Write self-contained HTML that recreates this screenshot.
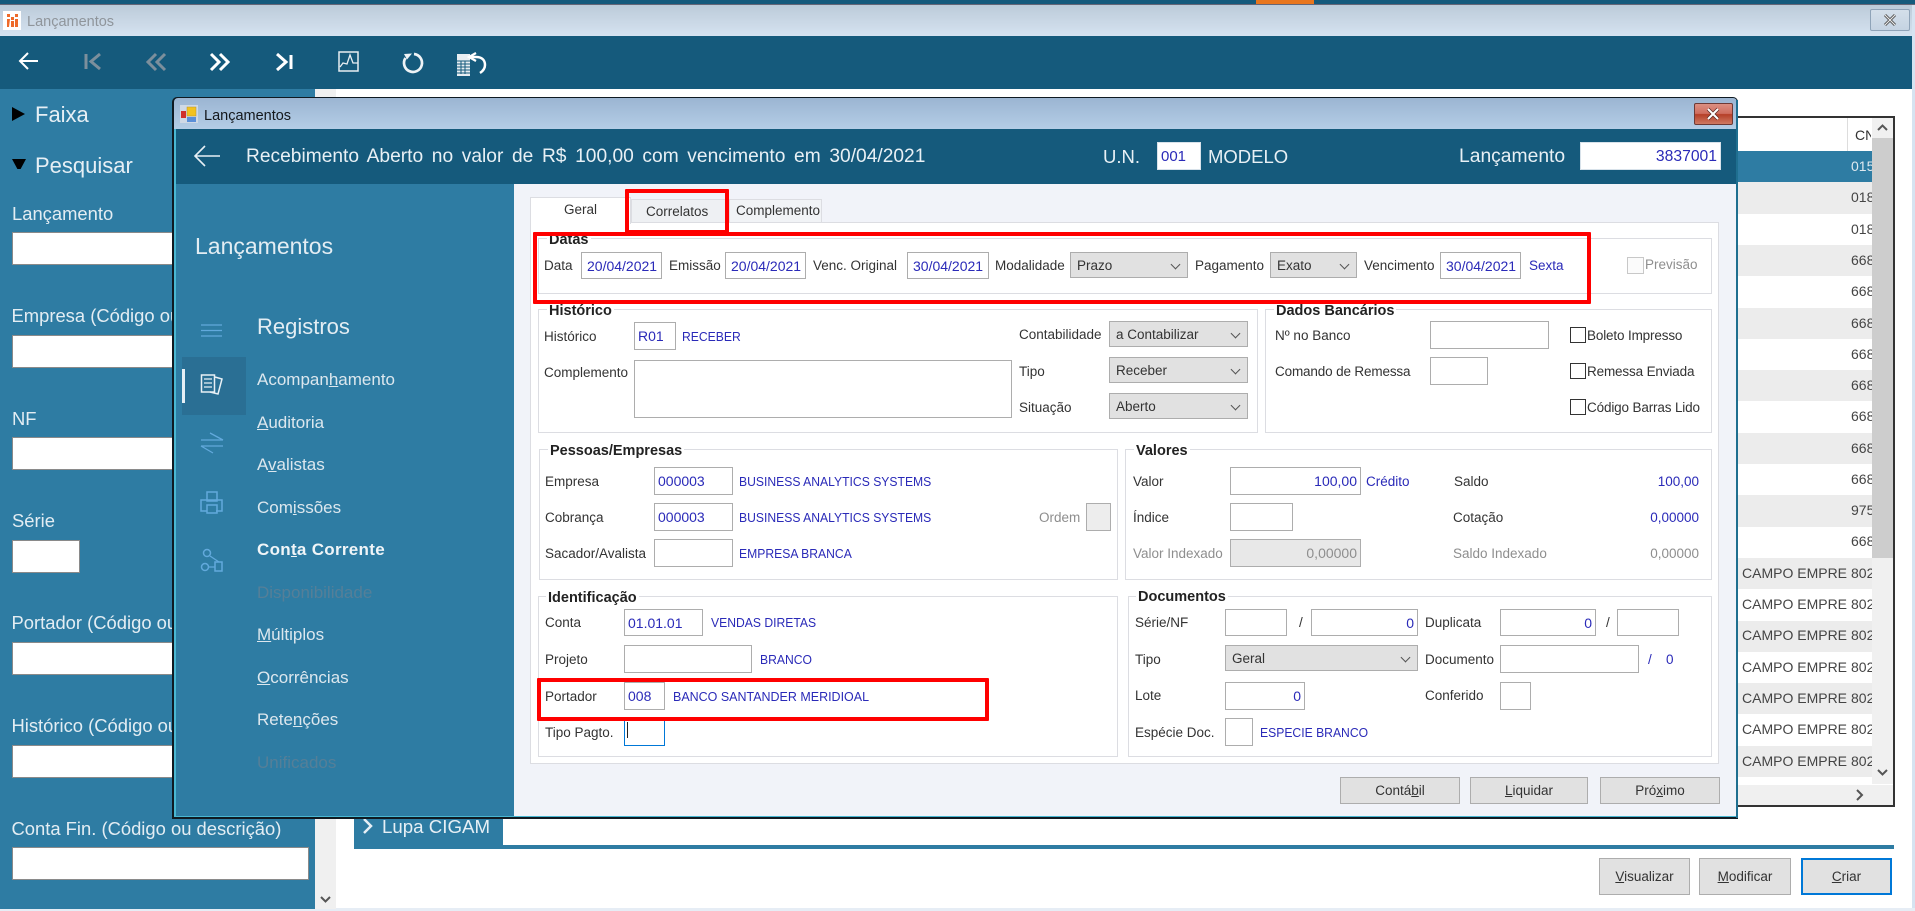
<!DOCTYPE html>
<html lang="pt-BR"><head><meta charset="utf-8"><title>Lançamentos</title>
<style>
html,body{margin:0;padding:0;width:1915px;height:911px;overflow:hidden;background:#fff}
body{position:relative;font-family:"Liberation Sans",sans-serif;font-size:13.5px;color:#333}
div,span.a,svg{position:absolute}
.t{position:absolute;line-height:20px;height:20px;white-space:nowrap}
.b{color:#2a2ab8;font-size:13px}
.c{transform:scaleX(.935);transform-origin:0 50%}
.g{color:#8e8e8e}
.i{background:#fff;border:1px solid #adadad;box-sizing:border-box;color:#2a2ab8;line-height:27px;padding:0 3px;font-size:14px;white-space:nowrap}
.d{padding-left:5px}
.r{text-align:right}
.s{background:#e1e1e1;border:1px solid #adadad;box-sizing:border-box;color:#333;line-height:25px;padding:0 6px;font-size:13.5px}
.s:after{content:"";position:absolute;right:8px;top:8px;width:6px;height:6px;border-right:1px solid #555;border-bottom:1px solid #555;transform:rotate(45deg)}
.gb{border:1px solid #dcdde2;box-sizing:border-box;background:#fff}
.l{font-weight:bold;font-size:14.5px;color:#222;background:#fff;padding:0 2px;line-height:16px;white-space:nowrap}
.btn{background:#e1e1e1;border:1px solid #adadad;box-sizing:border-box;text-align:center;color:#333;font-size:13.5px}
.red{border:4px solid #f00;box-sizing:border-box;border-radius:1px}
.lab{color:#e3edf3;font-size:18.4px}
.in{background:#fff;border:1px solid #8a8a8a;box-sizing:border-box;left:12px;width:297px;height:33px}
.m{color:#dce7ee;font-size:17px;left:257px}
.row{left:1500px;width:372px;height:31.3px}
.cell{position:absolute;line-height:31px;font-size:14px;color:#444;white-space:nowrap}
.cb{border:1px solid #333;box-sizing:border-box;background:#fff;width:16px;height:16px;left:1570px}
.n{letter-spacing:-.15px}
</style></head><body>

<!-- top strip -->
<div style="left:0;top:0;width:1915px;height:5px;background:#155a7c"></div>
<div style="left:1256px;top:0;width:58px;height:4px;background:#e8761e"></div>
<!-- outer title bar -->
<div style="left:0;top:4px;width:1915px;height:32px;background:linear-gradient(#bccbd9,#d6e3f1);border-top:1px solid #667"></div>
<div style="left:3px;top:11px;width:18px;height:19px;background:#fff"></div>
<svg style="left:0;top:0" width="30" height="36"><path d="M7 14h3v3h-3zM11 17h3v3h-3zM15 14h3v3h-3zM7 19h3l-1 8h-2zM11 21h3v6h-3zM15 19h3v8h-3z" fill="#ee6a2a"/></svg>
<div class="t" style="left:27px;top:12px;font-size:14.5px;color:#8f959b">Lançamentos</div>
<div style="left:1870px;top:9px;width:40px;height:22px;border:1px solid #8fa3b8;box-sizing:border-box;border-radius:2px;background:linear-gradient(#d4dfea,#c5d3e2)"></div>
<svg style="left:1870px;top:9px" width="40" height="22"><path d="M15 6l10 10M25 6L15 16" stroke="#555" stroke-width="3"/><path d="M15 6l10 10M25 6L15 16" stroke="#eee" stroke-width="1"/></svg>
<div style="left:1912px;top:5px;width:3px;height:906px;background:#d6e3f1"></div>
<div style="left:0;top:908px;width:1915px;height:3px;background:#e6edf5"></div>
<!-- toolbar -->
<div style="left:0;top:36px;width:1912px;height:53px;background:#155a7c"></div>
<svg style="left:0;top:36px" width="520" height="53" fill="none" stroke-linecap="butt">
<g transform="translate(0,-36)">
<path d="M38 61H20M28 53l-8 8 8 8" stroke="#fff" stroke-width="2"/>
<path d="M86 54v15M100 54l-9 7.500 9 7.500" stroke="#7c8f9c" stroke-width="3"/>
<path d="M156 54l-8 8 8 8M165 54l-8 8 8 8" stroke="#7c8f9c" stroke-width="3"/>
<path d="M211 54l8 8-8 8M220 54l8 8-8 8" stroke="#fff" stroke-width="3"/>
<path d="M277 54l9 8-9 8M291 55v14" stroke="#fff" stroke-width="3"/>
<rect x="339" y="52" width="19" height="19" stroke="#e8eef2" stroke-width="1.500"/><path d="M340 67l3-4 4 1 3-9 3 8h5" stroke="#e8eef2" stroke-width="1.300"/>
<path d="M414 54A9 9 0 1 1 405.500 58" stroke="#eef3f6" stroke-width="2.700"/><path d="M404 54l8-.5-5 6z" fill="#eef3f6"/>
<rect x="457" y="54" width="13" height="22" fill="#e8eef2" stroke="none"/><path d="M457 61h13M457 64h13M457 67h13M457 70h13M457 73h13M461 61v13M465 61v13" stroke="#155a7c" stroke-width="1"/>
<path d="M470 57h6c6 0 9 3 9 8 0 3-2 6-5 8" stroke="#fff" stroke-width="2.500"/><path d="M476 53l-7 4 7 4" stroke="#fff" stroke-width="2.200"/>
</g></svg>
<!-- left panel -->
<div style="left:0;top:89px;width:315px;height:820px;background:#2e7ca3"></div>
<svg style="left:0;top:89px" width="40" height="80"><path d="M12 18l13 7-13 7zM12 70h14l-7 13z" fill="#000"/></svg>
<div class="t" style="left:35px;top:105px;font-size:22px;color:#e6eff5">Faixa</div>
<div class="t" style="left:35px;top:156px;font-size:22px;color:#e6eff5">Pesquisar</div>
<div class="t lab" style="left:12px;top:204px">Lançamento</div><div class="in" style="top:232px"></div>
<div class="t lab" style="left:11.500px;top:306px">Empresa (Código ou descrição)</div><div class="in" style="top:335px"></div>
<div class="t lab" style="left:12px;top:409px">NF</div><div class="in" style="top:437px"></div>
<div class="t lab" style="left:12px;top:511px">Série</div><div class="in" style="top:540px;width:68px"></div>
<div class="t lab" style="left:11.500px;top:613px">Portador (Código ou descrição)</div><div class="in" style="top:642px"></div>
<div class="t lab" style="left:11.500px;top:716px">Histórico (Código ou descrição)</div><div class="in" style="top:745px"></div>
<div class="t lab" style="left:11.500px;top:819px">Conta Fin. (Código ou descrição)</div><div class="in" style="top:847px"></div>
<!-- scrollbar -->
<div style="left:315px;top:89px;width:21px;height:820px;background:#f0f0f0"></div>
<svg style="left:315px;top:890px" width="21" height="18"><path d="M6 7l4.500 4.500L15 7" fill="none" stroke="#555" stroke-width="2"/></svg>
<!-- table -->
<div style="left:1500px;top:116px;width:395px;height:691px;border:1px solid #333;border-width:2px 2px 2px 0;box-sizing:border-box;background:#fff"></div>
<div class="cell" style="left:1855px;top:120px;font-size:14px;width:16px;overflow:hidden;color:#333;line-height:30px">CNPJ</div>
<div style="left:1847px;top:118px;width:1px;height:33px;background:#ddd"></div>
<div class="row" style="top:151px;background:#2e7ca3"></div>
<div class="row" style="top:182.300px;background:#ececec"></div>
<div class="row" style="top:244.900px;background:#ececec"></div>
<div class="row" style="top:307.500px;background:#ececec"></div>
<div class="row" style="top:370.100px;background:#ececec"></div>
<div class="row" style="top:432.700px;background:#ececec"></div>
<div class="row" style="top:495.300px;background:#ececec"></div>
<div class="row" style="top:557.900px;background:#ececec"></div>
<div class="row" style="top:620.500px;background:#ececec"></div>
<div class="row" style="top:683.100px;background:#ececec"></div>
<div class="row" style="top:745.700px;background:#ececec"></div>
<div style="left:1851px;top:151px;width:21px;height:626px;overflow:hidden">
<div class="cell" style="left:0;top:0;color:#dfe9ef">015</div>
<div class="cell" style="left:0;top:31px">018</div>
<div class="cell" style="left:0;top:63px">018</div>
<div class="cell" style="left:0;top:94px">668</div>
<div class="cell" style="left:0;top:125px">668</div>
<div class="cell" style="left:0;top:157px">668</div>
<div class="cell" style="left:0;top:188px">668</div>
<div class="cell" style="left:0;top:219px">668</div>
<div class="cell" style="left:0;top:250px">668</div>
<div class="cell" style="left:0;top:282px">668</div>
<div class="cell" style="left:0;top:313px">668</div>
<div class="cell" style="left:0;top:344px">975</div>
<div class="cell" style="left:0;top:375px">668</div>
<div class="cell" style="left:0;top:407px">802</div>
<div class="cell" style="left:0;top:438px">802</div>
<div class="cell" style="left:0;top:469px">802</div>
<div class="cell" style="left:0;top:501px">802</div>
<div class="cell" style="left:0;top:532px">802</div>
<div class="cell" style="left:0;top:563px">802</div>
<div class="cell" style="left:0;top:595px">802</div>
</div>
<div class="cell" style="left:1742px;top:558px">CAMPO EMPRE</div>
<div class="cell" style="left:1742px;top:589px">CAMPO EMPRE</div>
<div class="cell" style="left:1742px;top:620px">CAMPO EMPRE</div>
<div class="cell" style="left:1742px;top:652px">CAMPO EMPRE</div>
<div class="cell" style="left:1742px;top:683px">CAMPO EMPRE</div>
<div class="cell" style="left:1742px;top:714px">CAMPO EMPRE</div>
<div class="cell" style="left:1742px;top:746px">CAMPO EMPRE</div>
<div style="left:1872px;top:118px;width:21px;height:666px;background:#f0f0f0"></div>
<div style="left:1872px;top:138px;width:21px;height:420px;background:#cdcdcd"></div>
<svg style="left:1872px;top:118px" width="21" height="20"><path d="M6 12l4.500-4.500L15 12" fill="none" stroke="#555" stroke-width="2"/></svg>
<svg style="left:1872px;top:764px" width="21" height="20"><path d="M6 6l4.500 4.500L15 6" fill="none" stroke="#555" stroke-width="2"/></svg>
<div style="left:1500px;top:785px;width:393px;height:20px;background:#f0f0f0"></div>
<svg style="left:1850px;top:785px" width="20" height="20"><path d="M7 5l5 5-5 5" fill="none" stroke="#555" stroke-width="2"/></svg>
<!-- lower -->
<div style="left:354px;top:800px;width:149px;height:49px;background:#2e7ca3"></div>
<div style="left:503px;top:845px;width:1391px;height:4px;background:#2e7ca3"></div>
<svg style="left:360px;top:816px" width="20" height="20"><path d="M4 3l7 7-7 7" fill="none" stroke="#e6eff5" stroke-width="2.500"/></svg>
<div class="t" style="left:382px;top:817px;font-size:18.700px;color:#e6eff5">Lupa CIGAM</div>
<div class="btn" style="left:1599px;top:858px;width:91px;height:37px;line-height:36px"><u>V</u>isualizar</div>
<div class="btn" style="left:1699px;top:858px;width:92px;height:37px;line-height:36px"><u>M</u>odificar</div>
<div class="btn" style="left:1801px;top:858px;width:91px;height:37px;line-height:34px;border:2px solid #0078d7"><u>C</u>riar</div>

<!-- DIALOG -->
<div style="left:172px;top:97px;width:1566px;height:722px;background:#0f1a22;border-radius:5px 5px 0 0"></div>
<div style="left:174px;top:98px;width:1563px;height:719px;background:linear-gradient(#9bb5d2 0,#b4cde6 31px,#49b7d2 31px);border-radius:4px 4px 0 0"></div>
<div style="left:176px;top:129px;width:1560px;height:55px;background:#155a7c"></div>
<div style="left:176px;top:184px;width:338px;height:632px;background:#2e7ca3"></div>
<div style="left:514px;top:184px;width:1222px;height:632px;background:#f1f3f9"></div>
<div style="left:1736px;top:100px;width:2px;height:718px;background:#1f6f90"></div>
<!-- dialog title -->
<svg style="left:178px;top:104px" width="22" height="20"><rect x="2" y="1" width="18" height="18" fill="#cfd9e6"/><rect x="3" y="7" width="5" height="7" fill="#d0302a"/><rect x="9" y="3" width="9" height="9" fill="#f2c21f" stroke="#b8932a" stroke-width=".5"/><rect x="9" y="13" width="9" height="5" fill="#5a8fd8"/></svg>
<div class="t" style="left:204px;top:106px;font-size:14.500px;color:#14181c">Lançamentos</div>
<div style="left:1694px;top:103px;width:39px;height:22px;border:1px solid #6d3a36;box-sizing:border-box;border-radius:2px;background:linear-gradient(#dc8f82 0,#cf6d5e 48%,#b53e27 52%,#cf7a63 100%)"></div>
<svg style="left:1694px;top:103px" width="39" height="22"><path d="M14 6l10 10M24 6L14 16" stroke="#5b2a26" stroke-width="3.500"/><path d="M14 6l10 10M24 6L14 16" stroke="#fff" stroke-width="2"/></svg>
<!-- dialog header -->
<svg style="left:190px;top:140px" width="36" height="32"><path d="M30 16H6M15 6L5 16l10 10" fill="none" stroke="#e6eff5" stroke-width="1.600"/></svg>
<div class="t" style="left:246px;top:147px;font-size:19.200px;word-spacing:3.300px;color:#e8f0f5">Recebimento Aberto no valor de R$ 100,00 com vencimento em 30/04/2021</div>
<div class="t" style="left:1103px;top:147px;font-size:18.500px;color:#e8f0f5">U.N.</div>
<div class="i" style="left:1157px;top:142px;width:44px;height:28px;font-size:15px;line-height:28px;border-color:#d8e2ea">001</div>
<div class="t" style="left:1208px;top:147px;font-size:18.500px;color:#e8f0f5">MODELO</div>
<div class="t" style="left:1459px;top:147px;font-size:19.300px;color:#e8f0f5">Lançamento</div>
<div class="i r" style="left:1580px;top:142px;width:141px;height:28px;font-size:15.700px;line-height:28px;border-color:#d8e2ea">3837001</div>
<!-- side panel -->
<div class="t" style="left:195px;top:236px;font-size:23px;color:#e3edf3">Lançamentos</div>
<div class="t" style="left:257px;top:317px;font-size:22px;color:#e3edf3">Registros</div>
<div style="left:182px;top:357px;width:64px;height:58px;background:#2a6f94"></div>
<div style="left:182px;top:369px;width:2.500px;height:34px;background:#e6eff5"></div>
<svg style="left:170px;top:300px" width="80" height="290" fill="none">
<path d="M31 25h21M31 30.500h21M31 36h21" stroke="#62a9dc" stroke-width="1.300"/>
<rect x="31.500" y="75" width="13" height="17" stroke="#e8f0f5" stroke-width="1.500"/><path d="M34 79h8M34 83h8M34 87h8" stroke="#e8f0f5" stroke-width="1.200"/><path d="M45 77l7 2-4 15-8-2" stroke="#e8f0f5" stroke-width="1.500"/>
<path d="M31 140h22M40 133l13 7M31 146h22M31 146l12 7" stroke="#62a9dc" stroke-width="1.300"/>
<rect x="37" y="192" width="10" height="9" stroke="#62a9dc" stroke-width="1.500"/><path d="M37 211h-6v-11h21v11h-6" stroke="#62a9dc" stroke-width="1.500"/><rect x="37" y="205" width="10" height="8" stroke="#62a9dc" stroke-width="1.500"/>
<circle cx="37" cy="253" r="3.500" stroke="#62a9dc" stroke-width="1.500"/><circle cx="35" cy="267" r="3.500" stroke="#62a9dc" stroke-width="1.500"/><rect x="45" y="262" width="7" height="9" stroke="#62a9dc" stroke-width="1.500"/><path d="M40 256l9 6M39 267h6" stroke="#62a9dc" stroke-width="1.300"/>
</svg>
<div class="t m" style="top:370px">Acompan<u>h</u>amento</div>
<div class="t m" style="top:413px"><u>A</u>uditoria</div>
<div class="t m" style="top:455px">A<u>v</u>alistas</div>
<div class="t m" style="top:498px">Com<u>i</u>ssões</div>
<div class="t m" style="top:540px;font-weight:bold;color:#f0f5f8;letter-spacing:.3px">Con<u>t</u>a Corrente</div>
<div class="t m" style="top:583px;color:#557f98">Disponibilidade</div>
<div class="t m" style="top:625px"><u>M</u>últiplos</div>
<div class="t m" style="top:668px"><u>O</u>corrências</div>
<div class="t m" style="top:710px">Rete<u>n</u>ções</div>
<div class="t m" style="top:753px;color:#557f98">Unificados</div>

<!-- tabs -->
<div style="left:530px;top:222px;width:1189px;height:542px;background:#fff;border:1px solid #dcdde2;box-sizing:border-box"></div>
<div style="left:631px;top:199px;width:98px;height:24px;background:#eef0f3;border:1px solid #dcdde2;box-sizing:border-box"></div>
<div style="left:729px;top:199px;width:93px;height:24px;background:#f1f3f6;border:1px solid #dcdde2;box-sizing:border-box"></div>
<div style="left:530px;top:197px;width:101px;height:27px;background:#fff;border:1px solid #dcdde2;border-bottom:0;box-sizing:border-box"></div>
<div class="t" style="left:564px;top:200px;font-size:13.500px">Geral</div>
<div class="t" style="left:646px;top:202px;font-size:13.500px">Correlatos</div>
<div class="t" style="left:736px;top:201px;font-size:13.500px">Complemento</div>

<!-- groups -->
<div class="gb" style="left:538px;top:238px;width:1174px;height:56px"></div>
<div class="l" style="left:547px;top:232px">Datas</div>
<div class="t" style="left:544px;top:256px">Data</div>
<div class="i d" style="left:581px;top:252px;width:81px;height:27px">20/04/2021</div>
<div class="t" style="left:669px;top:256px">Emissão</div>
<div class="i d" style="left:725px;top:252px;width:81px;height:27px">20/04/2021</div>
<div class="t" style="left:813px;top:256px">Venc. Original</div>
<div class="i d" style="left:907px;top:252px;width:82px;height:27px">30/04/2021</div>
<div class="t" style="left:995px;top:256px">Modalidade</div>
<div class="s" style="left:1070px;top:252px;width:118px;height:26px">Prazo</div>
<div class="t" style="left:1195px;top:256px">Pagamento</div>
<div class="s" style="left:1270px;top:252px;width:87px;height:26px">Exato</div>
<div class="t" style="left:1364px;top:256px">Vencimento</div>
<div class="i d" style="left:1440px;top:252px;width:81px;height:27px">30/04/2021</div>
<div class="t b" style="left:1529px;top:256px;font-size:13.500px">Sexta</div>
<div style="left:1627px;top:257px;width:17px;height:17px;border:1px solid #c8c8c8;box-sizing:border-box;background:#fbfbfb"></div>
<div class="t g" style="left:1645px;top:255px">Previsão</div>

<div class="gb" style="left:538px;top:309px;width:720px;height:124px"></div>
<div class="l" style="left:547px;top:303px">Histórico</div>
<div class="t" style="left:544px;top:327px">Histórico</div>
<div class="i" style="left:634px;top:322px;width:42px;height:28px">R01</div>
<div class="t b c" style="left:682px;top:327px">RECEBER</div>
<div class="t" style="left:544px;top:363px">Complemento</div>
<div class="i" style="left:634px;top:360px;width:378px;height:58px"></div>
<div class="t" style="left:1019px;top:325px">Contabilidade</div>
<div class="s" style="left:1109px;top:321px;width:139px;height:26px">a Contabilizar</div>
<div class="t" style="left:1019px;top:362px">Tipo</div>
<div class="s" style="left:1109px;top:357px;width:139px;height:26px">Receber</div>
<div class="t" style="left:1019px;top:398px">Situação</div>
<div class="s" style="left:1109px;top:393px;width:139px;height:26px">Aberto</div>

<div class="gb" style="left:1265px;top:309px;width:447px;height:124px"></div>
<div class="l" style="left:1274px;top:303px">Dados Bancários</div>
<div class="t" style="left:1275px;top:326px">Nº no Banco</div>
<div class="i" style="left:1430px;top:321px;width:119px;height:28px"></div>
<div class="t n" style="left:1275px;top:362px">Comando de Remessa</div>
<div class="i" style="left:1430px;top:357px;width:58px;height:28px"></div>
<div class="cb" style="top:327px"></div><div class="t n" style="left:1587px;top:326px">Boleto Impresso</div>
<div class="cb" style="top:363px"></div><div class="t n" style="left:1587px;top:362px">Remessa Enviada</div>
<div class="cb" style="top:399px"></div><div class="t n" style="left:1587px;top:398px">Código Barras Lido</div>

<div class="gb" style="left:539px;top:449px;width:579px;height:131px"></div>
<div class="l" style="left:548px;top:443px">Pessoas/Empresas</div>
<div class="t" style="left:545px;top:472px">Empresa</div>
<div class="i" style="left:654px;top:467px;width:79px;height:28px">000003</div>
<div class="t b c" style="left:739px;top:472px">BUSINESS ANALYTICS SYSTEMS</div>
<div class="t" style="left:545px;top:508px">Cobrança</div>
<div class="i" style="left:654px;top:503px;width:79px;height:28px">000003</div>
<div class="t b c" style="left:739px;top:508px">BUSINESS ANALYTICS SYSTEMS</div>
<div class="t g" style="left:1039px;top:508px">Ordem</div>
<div style="left:1086px;top:503px;width:25px;height:28px;background:#ededed;border:1px solid #adadad;box-sizing:border-box"></div>
<div class="t" style="left:545px;top:544px">Sacador/Avalista</div>
<div class="i" style="left:654px;top:539px;width:79px;height:28px"></div>
<div class="t b c" style="left:739px;top:544px">EMPRESA BRANCA</div>

<div class="gb" style="left:538px;top:596px;width:580px;height:161px"></div>
<div class="l" style="left:546px;top:590px">Identificação</div>
<div class="t" style="left:545px;top:613px">Conta</div>
<div class="i" style="left:624px;top:609px;width:79px;height:27px">01.01.01</div>
<div class="t b c" style="left:711px;top:613px">VENDAS DIRETAS</div>
<div class="t" style="left:545px;top:650px">Projeto</div>
<div class="i" style="left:624px;top:645px;width:128px;height:28px"></div>
<div class="t b c" style="left:760px;top:650px">BRANCO</div>
<div class="t" style="left:545px;top:687px">Portador</div>
<div class="i" style="left:624px;top:682px;width:41px;height:28px">008</div>
<div class="t b" style="left:673px;top:687px;transform:scaleX(.96);transform-origin:0 50%">BANCO SANTANDER MERIDIOAL</div>
<div class="t" style="left:545px;top:723px">Tipo Pagto.</div>
<div class="i" style="left:624px;top:718px;width:41px;height:28px;border-color:#0078d7"></div>
<div style="left:627px;top:722px;width:1px;height:16px;background:#222"></div>

<div class="gb" style="left:1125px;top:449px;width:587px;height:131px"></div>
<div class="l" style="left:1134px;top:443px">Valores</div>
<div class="t" style="left:1133px;top:472px">Valor</div>
<div class="i r" style="left:1230px;top:467px;width:131px;height:28px">100,00</div>
<div class="t b" style="left:1366px;top:472px;font-size:13.500px">Crédito</div>
<div class="t" style="left:1454px;top:472px">Saldo</div>
<div class="t b" style="right:216px;top:472px;font-size:13.500px">100,00</div>
<div class="t" style="left:1133px;top:508px">Índice</div>
<div class="i" style="left:1230px;top:503px;width:63px;height:28px"></div>
<div class="t" style="left:1453px;top:508px">Cotação</div>
<div class="t b" style="right:216px;top:508px;font-size:13.500px">0,00000</div>
<div class="t g" style="left:1133px;top:544px">Valor Indexado</div>
<div class="i r" style="left:1230px;top:539px;width:131px;height:28px;background:#e8e8e8;color:#8e8e8e">0,00000</div>
<div class="t g" style="left:1453px;top:544px">Saldo Indexado</div>
<div class="t g" style="right:216px;top:544px">0,00000</div>

<div class="gb" style="left:1128px;top:596px;width:584px;height:161px"></div>
<div class="l" style="left:1136px;top:589px">Documentos</div>
<div class="t" style="left:1135px;top:613px">Série/NF</div>
<div class="i" style="left:1225px;top:609px;width:62px;height:27px"></div>
<div class="t" style="left:1299px;top:613px">/</div>
<div class="i r" style="left:1311px;top:609px;width:107px;height:27px">0</div>
<div class="t" style="left:1425px;top:613px">Duplicata</div>
<div class="i r" style="left:1500px;top:609px;width:96px;height:27px">0</div>
<div class="t" style="left:1606px;top:613px">/</div>
<div class="i" style="left:1617px;top:609px;width:62px;height:27px"></div>
<div class="t" style="left:1135px;top:650px">Tipo</div>
<div class="s" style="left:1225px;top:645px;width:193px;height:26px">Geral</div>
<div class="t" style="left:1425px;top:650px">Documento</div>
<div class="i" style="left:1500px;top:645px;width:139px;height:28px"></div>
<div class="t" style="left:1648px;top:650px;color:#2a2ab8">/</div>
<div class="t" style="left:1666px;top:650px;color:#2a2ab8">0</div>
<div class="t" style="left:1135px;top:686px">Lote</div>
<div class="i r" style="left:1225px;top:682px;width:80px;height:28px">0</div>
<div class="t" style="left:1425px;top:686px">Conferido</div>
<div class="i" style="left:1500px;top:682px;width:31px;height:28px"></div>
<div class="t" style="left:1135px;top:723px">Espécie Doc.</div>
<div class="i" style="left:1225px;top:718px;width:28px;height:28px"></div>
<div class="t b c" style="left:1260px;top:723px">ESPECIE BRANCO</div>

<!-- dialog buttons -->
<div class="btn" style="left:1340px;top:777px;width:120px;height:27px;line-height:26px">Contá<u>b</u>il</div>
<div class="btn" style="left:1470px;top:777px;width:118px;height:27px;line-height:26px"><u>L</u>iquidar</div>
<div class="btn" style="left:1600px;top:777px;width:120px;height:27px;line-height:26px">Pró<u>x</u>imo</div>

<!-- red annotations -->
<div class="red" style="left:625px;top:189px;width:104px;height:45px"></div>
<div class="red" style="left:533px;top:232px;width:1058px;height:72px"></div>
<div class="red" style="left:537px;top:678px;width:452px;height:43px"></div>
</body></html>
